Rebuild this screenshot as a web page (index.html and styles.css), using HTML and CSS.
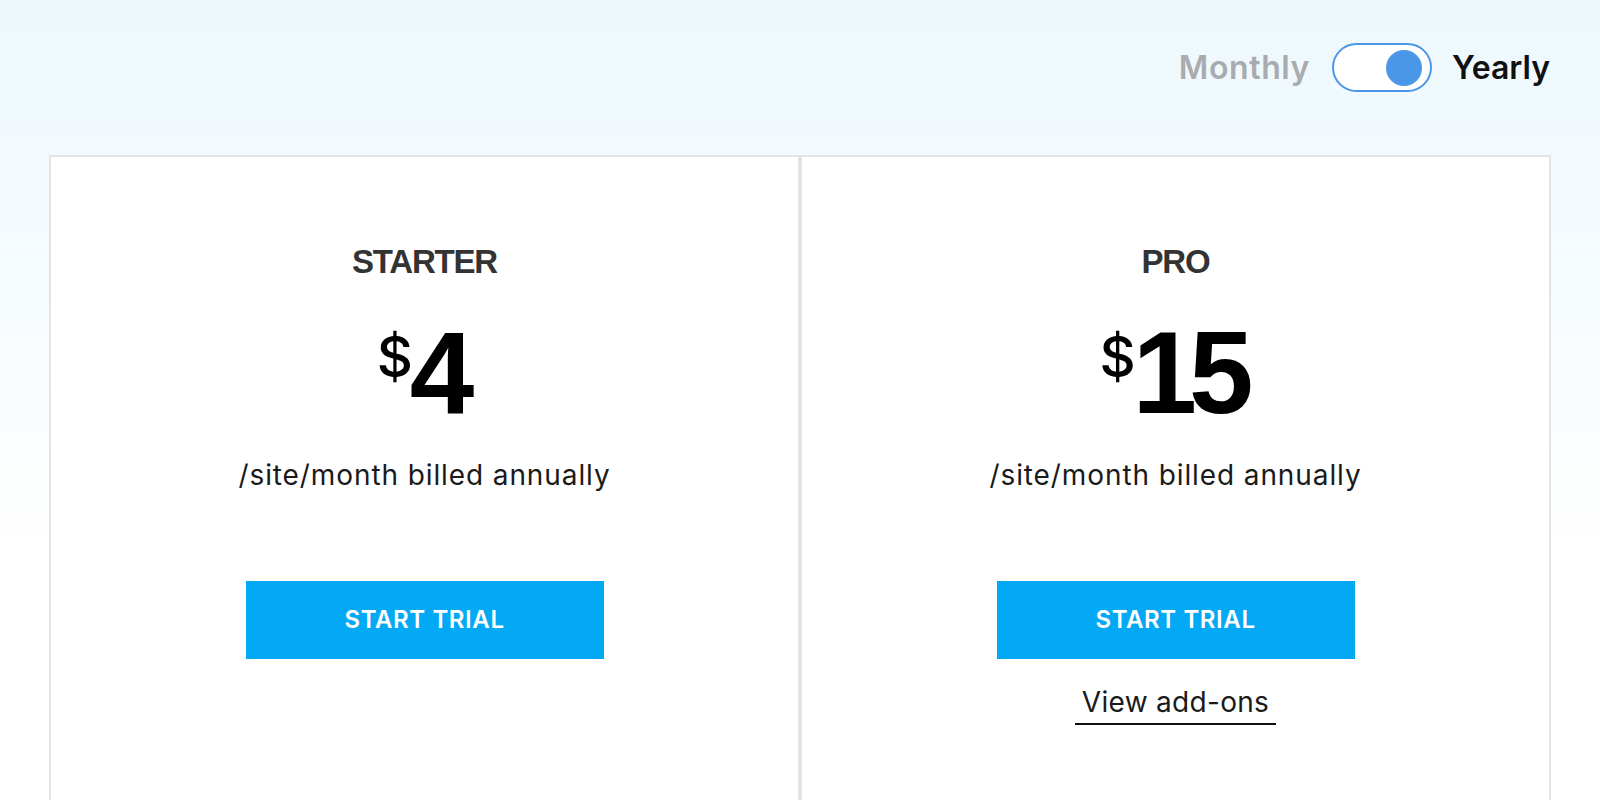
FILE: index.html
```html
<!DOCTYPE html>
<html lang="en">
<head>
    <meta charset="UTF-8">
    <meta name="viewport" content="width=device-width, initial-scale=1.0">
    <title>Pricing</title>
    <link rel="stylesheet" href="styles.css">
</head>
<body>
    <div class="page">
        <div class="billing">
            <span class="billing-label muted">Monthly</span>
            <div class="switch"><span class="knob"></span></div>
            <span class="billing-label">Yearly</span>
        </div>

        <div class="plans">
            <div class="plan">
                <h3 class="plan-name">STARTER</h3>
                <div class="price"><span class="currency">$</span><span class="amount">4</span></div>
                <p class="period">/site/month billed annually</p>
                <a class="trial-btn" href="#">START TRIAL</a>
            </div>
            <div class="plan">
                <h3 class="plan-name">PRO</h3>
                <div class="price"><span class="currency">$</span><span class="amount">15</span></div>
                <p class="period">/site/month billed annually</p>
                <a class="trial-btn" href="#">START TRIAL</a>
                <a class="addons" href="#">View add-ons</a>
            </div>
        </div>
    </div>
</body>
</html>
```

FILE: styles.css
```css
html, body {
    margin: 0;
    height: 100%;
}
body {
    font-family: Inter, "Liberation Sans", Arial, sans-serif;
    color: #1a1a1a;
    background: linear-gradient(#edf8fd, #ffffff 70%);
    overflow: hidden;
}
.page {
    padding: 43px 49px 0;
}
.billing {
    display: flex;
    justify-content: flex-end;
    align-items: center;
    height: 49px;
    padding-right: 1px;
    margin-bottom: 63px;
}
.billing-label {
    font-size: 32px;
    font-weight: 600;
    color: #111;
}
.billing-label.muted {
    color: #a9acae;
    letter-spacing: 0.6px;
    margin-right: 22px;
}
.switch {
    box-sizing: border-box;
    width: 100px;
    height: 49px;
    border: 2px solid #4a97e8;
    border-radius: 25px;
    background: #fff;
    display: flex;
    justify-content: flex-end;
    align-items: center;
    padding-right: 8px;
    margin-right: 20px;
}
.knob {
    width: 36px;
    height: 36px;
    border-radius: 50%;
    background: #4a97e8;
}
.plans {
    display: grid;
    grid-template-columns: 1fr 1fr;
}
.plan {
    border: 2px solid #e4e4e4;
    background: #fff;
    min-height: 700px;
    padding-top: 85px;
    text-align: center;
}
.plan-name {
    margin: 0 0 33px;
    font-family: "Liberation Sans", Arial, sans-serif;
    font-size: 33px;
    line-height: 40px;
    font-weight: bold;
    letter-spacing: -1.2px;
    color: #333;
}
.price {
    display: flex;
    justify-content: center;
    align-items: flex-start;
    font-family: "Liberation Sans", Arial, sans-serif;
    color: #000;
}
.currency {
    font-family: Inter, sans-serif;
    font-size: 56px;
    font-weight: 500;
    line-height: 1;
    margin-top: 14px;
    margin-right: -3px;
}
.amount {
    font-size: 116px;
    line-height: 1;
    font-weight: bold;
    letter-spacing: -8px;
    margin-right: 6px;
}
.period {
    margin: 26px 0 0;
    font-size: 28px;
    line-height: 36px;
    letter-spacing: 0.9px;
}
.trial-btn {
    display: block;
    width: 358px;
    height: 78px;
    margin: 88px auto 0;
    background: #03a9f4;
    color: #fff;
    font-size: 24px;
    font-weight: 600;
    line-height: 78px;
    letter-spacing: 0.6px;
    text-decoration: none;
}
.addons {
    display: inline-block;
    margin-top: 25px;
    padding: 0 7px 3px;
    border-bottom: 2px solid #111;
    font-size: 28px;
    line-height: 36px;
    letter-spacing: 0.3px;
    color: #1a1a1a;
    text-decoration: none;
}
```
